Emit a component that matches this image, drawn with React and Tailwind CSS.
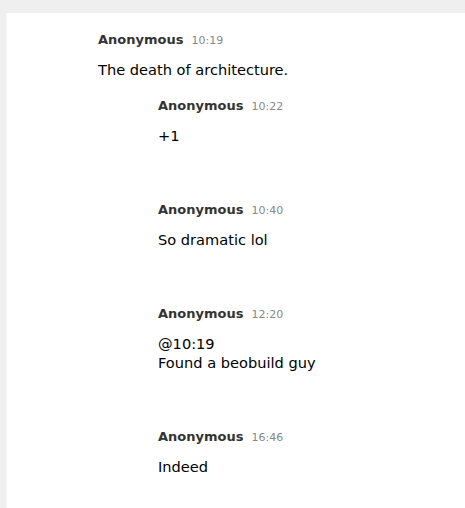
const replies = [
  { time: '10:22', lines: ['+1'] },
  { time: '10:40', lines: ['So dramatic lol'] },
  { time: '12:20', lines: ['@10:19', 'Found a beobuild guy'] },
  { time: '16:46', lines: ['Indeed'] },
]

const Header = ({ time }) => (
  <div className="flex items-baseline gap-2 leading-[19px]">
    <span className="text-[13px] font-bold text-[#333]">Anonymous</span>
    <span className="text-[11px] text-[#888]">{time}</span>
  </div>
)

export default function App() {
  return (
    <div className="min-h-[508px] bg-[#efefef] pt-[13px] font-['DejaVu_Sans',sans-serif]">
      <div className="min-h-[495px] ml-[6px] bg-white pl-[91px] pt-[17px] border-l border-[#f7f7f7]">
        <Header time="10:19" />
        <p className="mt-[10px] text-[14.6px] leading-[19px] text-black">The death of architecture.</p>
        <div className="pl-[60px] mt-[17px]">
          {replies.map((r, i) => (
            <div key={i} className="mb-[55px]">
              <Header time={r.time} />
              <div className="mt-[10px] text-[14.6px] leading-[19px] text-black">
                {r.lines.map((l, j) => <div key={j}>{l}</div>)}
              </div>
            </div>
          ))}
        </div>
      </div>
    </div>
  )
}
